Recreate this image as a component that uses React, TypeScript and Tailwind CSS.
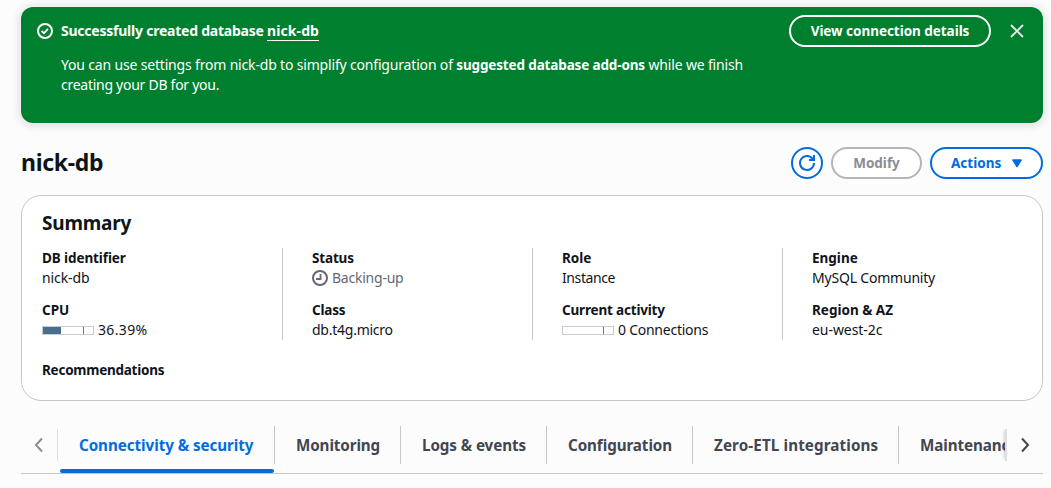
import type { ReactNode } from "react";

function Field({ label, labelClass = "", children }: { label: string; labelClass?: string; children?: ReactNode }) {
  return (
    <div>
      <dt className={`h-5 text-[13.5px] font-bold whitespace-nowrap ${labelClass}`}>{label}</dt>
      {children && <dd className="flex h-5 items-center whitespace-nowrap">{children}</dd>}
    </div>
  );
}

function Column({ children }: { children: ReactNode }) {
  return <div className="flex h-[92px] flex-col gap-3 border-l border-[#c6c6cd] pl-[29px]">{children}</div>;
}

function Meter({ percent }: { percent: number }) {
  return (
    <span className="relative mr-1 block h-[9px] w-[52px] border border-[#cccccc] bg-white">
      <span className="block h-full bg-[#486f92]" style={{ width: `${percent}%` }} />
      <span className="absolute inset-y-0 left-10 w-px bg-[#c8504c]" />
    </span>
  );
}

function Tab({ label, width, text = "", active = false }: { label: string; width: string; text?: string; active?: boolean }) {
  return (
    <button
      className={`flex h-[47px] shrink-0 flex-col justify-between whitespace-nowrap ${width} ${active ? "text-[#006ce0]" : "text-[#424650]"}`}
    >
      <span className={`flex h-[38px] w-full items-center border-r border-[#c6c6cd] pl-[21px] text-left text-[15.2px] font-bold ${text}`}>
        {label}
      </span>
      {active && <span className="ml-0.5 h-1 w-[214px] rounded-xs bg-[#006ce0]" />}
    </button>
  );
}

export default function App() {
  return (
    <main className="h-[488px] overflow-hidden bg-[#fcfcfd] pt-[7px] pr-2 pl-[21px] font-['Noto_Sans',sans-serif] text-[14px] leading-5 text-[#0f141a]">
      <section className="flex h-[116px] items-start rounded-xl bg-[#00802f] pt-2 pl-4 text-white shadow-[0_0_1px_1px_#f3f3f7,0_1px_8px_2px_rgba(0,7,22,0.12)]">
        <svg className="mt-2 size-4" viewBox="0 0 16 16" fill="none" stroke="currentColor" strokeWidth="2">
          <circle cx="8" cy="8" r="7" />
          <path d="m4.5 8 2.5 2.2 4-4.4" strokeWidth="1.8" />
        </svg>
        <div className="ml-2 w-[720px] pt-[6px]">
          <h2 className="font-bold whitespace-nowrap">
            <span className="tracking-[-0.23px]">Successfully created database </span>
            <a className="inline-block h-5 border-b border-white tracking-[0.08px]">nick-db</a>
          </h2>
          <p className="mt-3.5 whitespace-nowrap">
            <span className="tracking-[-0.175px]">You can use settings from nick-db to simplify configuration of </span>
            <b className="text-[13.5px] font-bold tracking-[-0.14px]">suggested database add-ons</b>
            <span className="tracking-[-0.17px]"> while we finish</span>
            <br />
            <span className="tracking-[-0.27px]">creating your DB for you.</span>
          </p>
        </div>
        <button className="ml-2 flex h-8 w-[202px] items-center justify-center rounded-full border-2 border-white text-[13.5px] font-bold tracking-[-0.04px]">
          View connection details
        </button>
        <svg className="mt-2 ml-[18px] size-4" viewBox="0 0 16 16" fill="none" stroke="#ebebf0" strokeWidth="1.8">
          <path d="m2 2 12 12M14 2 2 14" />
        </svg>
      </section>

      <header className="mt-6 flex h-8 items-center gap-2">
        <h1 className="mr-auto h-8 text-[23px] leading-[31px] font-bold tracking-[-0.3px]">nick-db</h1>
        <button className="flex size-8 items-center justify-center rounded-full border-2 border-[#006ce0] bg-white text-[#006ce0]">
          <svg className="size-4" viewBox="0 0 16 16" fill="none" stroke="currentColor" strokeWidth="2">
            <path d="M15 8a7 7 0 1 1-1.6-4.5L15 5" />
            <path d="M10 5h5V0" />
          </svg>
        </button>
        <button className="h-8 w-[91px] rounded-full border-2 border-[#b4b4bb] bg-white text-[13.5px] font-bold text-[#8c8c94]">
          Modify
        </button>
        <button className="flex h-8 w-[113px] items-center rounded-full border-2 border-[#006ce0] bg-white pl-[19px] text-[13.5px] font-bold text-[#006ce0]">
          Actions
          <svg className="ml-2 size-4" viewBox="0 0 16 16" fill="currentColor">
            <path d="M4 5h8l-4 6.5Z" stroke="currentColor" strokeWidth="1.6" strokeLinejoin="round" />
          </svg>
        </button>
      </header>

      <section className="mt-4 h-[206px] rounded-[20px] border border-[#c6c6cd] bg-white px-5 pt-[15px]">
        <h2 className="h-6 text-[19px] leading-6 font-bold tracking-[-0.22px]">Summary</h2>
        <dl className="mt-[13px]">
          <div className="grid grid-cols-[240px_250px_250px_1fr]">
            <div className="flex flex-col gap-3">
              <Field label="DB identifier" labelClass="tracking-[-0.1px]">
                <span className="tracking-[-0.1px]">nick-db</span>
              </Field>
              <Field label="CPU">
                <Meter percent={36.39} />
                <span className="tracking-[0.35px]">36.39%</span>
              </Field>
            </div>
            <Column>
              <Field label="Status" labelClass="tracking-[-0.16px]">
                <span className="flex items-center gap-1 text-[#656871]">
                  <svg className="size-4" viewBox="0 0 16 16" fill="none" stroke="currentColor" strokeWidth="2">
                    <circle cx="8" cy="8" r="7" />
                    <path d="M8.5 4v5H4" strokeWidth="1.8" />
                  </svg>
                  <span className="tracking-[-0.23px]">Backing-up</span>
                </span>
              </Field>
              <Field label="Class" labelClass="tracking-[-0.18px]">
                <span className="tracking-[-0.25px]">db.t4g.micro</span>
              </Field>
            </Column>
            <Column>
              <Field label="Role" labelClass="tracking-[-0.05px]">
                <span className="tracking-[-0.4px]">Instance</span>
              </Field>
              <Field label="Current activity" labelClass="tracking-[-0.18px]">
                <Meter percent={0} />
                <span className="tracking-[-0.25px]">0 Connections</span>
              </Field>
            </Column>
            <Column>
              <Field label="Engine">
                <span className="tracking-[-0.2px]">MySQL Community</span>
              </Field>
              <Field label="Region & AZ">
                <span className="tracking-[-0.05px]">eu-west-2c</span>
              </Field>
            </Column>
          </div>
          <div className="mt-5">
            <Field label="Recommendations" labelClass="tracking-[-0.25px]" />
          </div>
        </dl>
      </section>

      <nav className="mt-[25px] flex h-12 border-b border-[#c6c6cd]">
        <button className="mt-[3px] flex h-8 w-[37px] items-center justify-center border-r border-[#dedee3] text-[#8c8c94]">
          <svg className="size-4" viewBox="0 0 16 16" fill="none" stroke="currentColor" strokeWidth="2">
            <path d="m11 1.5-6 6.5 6 6.5" />
          </svg>
        </button>
        <div className="flex w-[947px] overflow-hidden">
          <Tab label="Connectivity & security" width="w-[217px]" text="tracking-[-0.06px]" active />
          <Tab label="Monitoring" width="w-[126px]" text="tracking-[-0.1px]" />
          <Tab label="Logs & events" width="w-[146px]" text="tracking-[-0.08px]" />
          <Tab label="Configuration" width="w-[146px]" text="tracking-[-0.08px]" />
          <Tab label="Zero-ETL integrations" width="w-[206px]" text="tracking-[0.12px]" />
          <Tab label="Maintenance" width="w-[130px]" text="tracking-[-0.08px]" />
        </div>
        <button className="mt-[3px] flex h-8 w-[38px] items-center justify-center border-l-2 border-[#dedee3] text-[#424650] shadow-[-3px_0_3px_-2px_rgba(0,7,22,0.18)]">
          <svg className="size-4" viewBox="0 0 16 16" fill="none" stroke="currentColor" strokeWidth="2">
            <path d="m5 1.5 6 6.5-6 6.5" />
          </svg>
        </button>
      </nav>
    </main>
  );
}
